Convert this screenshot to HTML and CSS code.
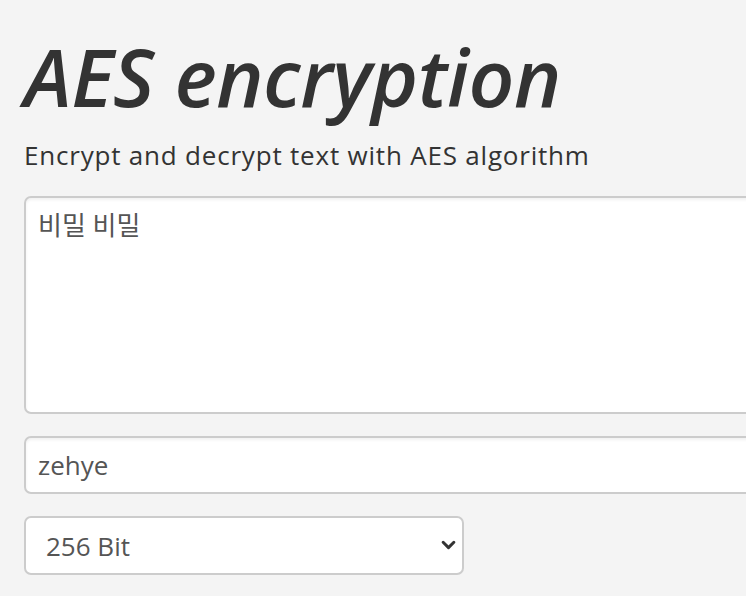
FILE: index.html
```html
<!DOCTYPE html>
<html lang="en">
<head>
    <meta charset="UTF-8">
    <title>AES encryption</title>
    <meta name="viewport" content="width=device-width, initial-scale=1.0">
    <link rel="stylesheet" href="styles.css">
</head>
<body>
    <main class="page">
        <h1 class="title">AES encryption</h1>
        <p class="subtitle">Encrypt and decrypt text with AES algorithm</p>

        <form class="aes-form">
            <textarea class="field text-field" rows="6">비밀 비밀</textarea>
            <input class="field key-field" type="text" value="zehye">
            <div class="select-wrap">
                <select class="field bits-field">
                    <option>128 Bit</option>
                    <option>192 Bit</option>
                    <option selected>256 Bit</option>
                </select>
                <svg class="chevron" viewBox="0 0 14 10" xmlns="http://www.w3.org/2000/svg">
                    <path d="M2 2 L7 7 L12 2" stroke="#333" stroke-width="2.8" fill="none" stroke-linecap="round" stroke-linejoin="round"/>
                </svg>
            </div>
        </form>
    </main>
</body>
</html>
```

FILE: styles.css
```css
/* General Styles */
body {
    margin: 0;
    padding: 0;
    background-color: #f4f4f4;
    color: #333333;
    font-family: 'Open Sans', 'Noto Sans', 'Noto Sans CJK KR', sans-serif;
    overflow: hidden;
}

.page {
    padding: 28px 0 0 24px;
    width: 800px;
}

/* Heading */
.title {
    margin: 0;
    font-size: 80px;
    font-style: italic;
    font-weight: 600;
    line-height: 96px;
    letter-spacing: -0.4px;
    color: #333333;
}

.subtitle {
    margin: 14px 0 24px 0;
    font-size: 26px;
    line-height: 34px;
    letter-spacing: 0.8px;
    color: #333333;
}

/* Form */
.aes-form {
    display: flex;
    flex-direction: column;
    gap: 22px;
}

.field {
    box-sizing: border-box;
    font-family: 'Open Sans', 'Noto Sans CJK KR', sans-serif;
    font-size: 26px;
    color: #555555;
    background-color: #ffffff;
    border: 2px solid #cccccc;
    border-radius: 7px;
    box-shadow: inset 0 2px 3px rgba(0, 0, 0, 0.06);
    outline: none;
}

.text-field {
    width: 760px;
    height: 218px;
    padding: 11px 12px;
    resize: none;
    line-height: 1.3;
}

.key-field {
    width: 760px;
    height: 58px;
    padding: 0 12px;
}

.select-wrap {
    position: relative;
    width: 440px;
}

.bits-field {
    width: 440px;
    height: 59px;
    padding: 0 20px;
    appearance: none;
    -webkit-appearance: none;
    box-shadow: none;
}

.chevron {
    position: absolute;
    right: 8px;
    top: 24px;
    width: 15px;
    height: 11px;
    pointer-events: none;
}
```
